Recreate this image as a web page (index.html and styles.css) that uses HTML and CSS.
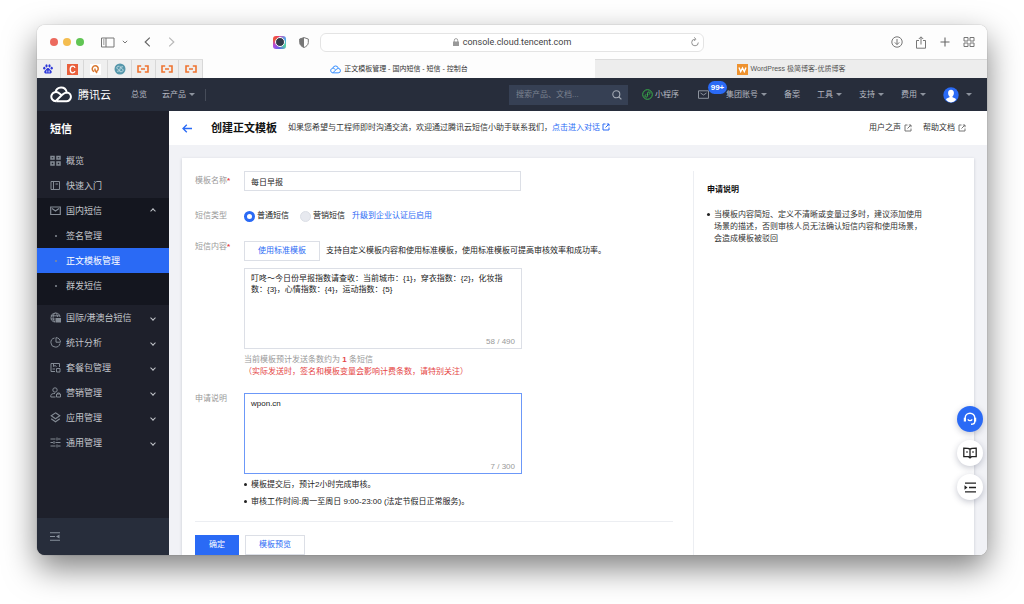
FILE: index.html
```html
<!DOCTYPE html>
<html lang="zh-CN">
<head>
<meta charset="utf-8">
<title>正文模板管理 - 国内短信 - 短信 - 控制台</title>
<link rel="stylesheet" href="styles.css">
</head>
<body>
<svg class="defs" aria-hidden="true">
  <symbol id="cloud" viewBox="0 0 22 17"><path d="M6.2 15.2h10a4.4 4.4 0 0 0 .6-8.800c-2 0-3.200 1-4.600 2.300L5.800 15M6 15.200a4.600 4.600 0 1 1 2.800-8.200l2.200 1.800M5.600 6.100a5.600 5.600 0 0 1 11-.2" fill="none" stroke="currentColor" stroke-width="2"/></symbol>
  <symbol id="ext" viewBox="0 0 8 8"><path d="M3.500 1H1v6h6V4.500M4.800 1H7v2.200M7 1 3.500 4.500" fill="none" stroke="currentColor" stroke-width="1"/></symbol>
  <symbol id="link" viewBox="0 0 12 8"><path d="M4.200 1H1v6h3.200M7.800 1H11v6H7.800M4 4h4" fill="none" stroke="#ee7330" stroke-width="1.600"/></symbol>
</svg>
<div class="window">
  <header class="toolbar">
    <div class="tools">
      <span class="lights"><i class="red"></i><i class="yellow"></i><i class="green"></i></span>
      <button class="icon-btn panel" aria-label="边栏"><svg width="14" height="11" viewBox="0 0 14 11"><path d="M.5 1h12.500v9H.5zM5 1v9M2 3h1.500M2 5h1.500M2 7h1.500" fill="none" stroke="#777"/></svg></button>
      <button class="icon-btn more" aria-label="标签组"><svg width="6" height="4" viewBox="0 0 6 4"><path d="m.8.8 2.200 2.200L5.200.8" fill="none" stroke="#777"/></svg></button>
      <button class="icon-btn back" aria-label="后退"><svg width="7" height="10" viewBox="0 0 7 10"><path d="M5.800.6 1.200 5l4.600 4.400" fill="none" stroke="#666" stroke-width="1.200"/></svg></button>
      <button class="icon-btn" aria-label="前进"><svg width="7" height="10" viewBox="0 0 7 10"><path d="M1.200.6 5.800 5 1.200 9.400" fill="none" stroke="#b8b8b8" stroke-width="1.200"/></svg></button>
      <span class="extensions">
        <span class="lens"><i></i></span>
        <svg width="10" height="11" viewBox="0 0 10 11"><path d="M5 .6 9.300 2v3.500c0 2.500-2 4-4.300 5-2.300-1-4.300-2.500-4.300-5V2z" fill="#fff" stroke="#777"/><path d="M5 .6v9.900c-2.300-1-4.300-2.500-4.300-5V2z" fill="#777"/></svg>
      </span>
    </div>
    <div class="address">
      <span class="url"><svg width="6" height="8" viewBox="0 0 6 8"><path d="M0 3.500h6V8H0z" fill="#999"/><path d="M1.300 4V2.300a1.700 1.700 0 0 1 3.400 0V4" fill="none" stroke="#999" stroke-width=".9"/></svg>console.cloud.tencent.com</span>
      <button class="icon-btn reload" aria-label="重新载入"><svg width="8" height="10" viewBox="0 0 8 10"><path d="M4 2.200a3.300 3.300 0 1 0 3.300 3.300M3.200.4 5 2.200 3.200 4" fill="none" stroke="#888" stroke-width=".9"/></svg></button>
    </div>
    <div class="actions">
      <button class="icon-btn" aria-label="下载"><svg width="12" height="12" viewBox="0 0 12 12"><circle cx="6" cy="6" r="5.200" fill="none" stroke="#777"/><path d="M6 3v5.500M3.800 6.400 6 8.600l2.200-2.200" fill="none" stroke="#777"/></svg></button>
      <button class="icon-btn" aria-label="分享"><svg width="12" height="13" viewBox="0 0 12 13"><path d="M4 4.500H1.500v7.700h9V4.500H8M6 8.500V1M3.800 3 6 .8 8.200 3" fill="none" stroke="#777"/></svg></button>
      <button class="icon-btn" aria-label="新标签页"><svg width="12" height="12" viewBox="0 0 12 12"><path d="M6 1.500v9M1.500 6h9" fill="none" stroke="#666" stroke-width="1.100"/></svg></button>
      <button class="icon-btn" aria-label="标签页概览"><svg width="12" height="12" viewBox="0 0 12 12"><path d="M1 1.500h4v3.500H1zM7 1.500h4v3.500H7zM1 7h4v3.500H1zM7 7h4v3.500H7z" fill="none" stroke="#777"/></svg></button>
    </div>
  </header>

  <div class="tabs">
    <div class="pinned">
      <span><svg width="10" height="10" viewBox="0 0 10 10" fill="#2b36d8"><ellipse cx="3.500" cy="1.800" rx="1.100" ry="1.600"/><ellipse cx="6.500" cy="1.800" rx="1.100" ry="1.600"/><ellipse cx="1.300" cy="4.200" rx="1.100" ry="1.400"/><ellipse cx="8.700" cy="4.200" rx="1.100" ry="1.400"/><path d="M5 4c1.500 0 1.800 1.500 3 2.500 1.500 1.300.5 3.300-1.200 3.100-1.200-.2-2.400-.2-3.600 0C1.500 9.800.5 7.800 2 6.500 3.200 5.500 3.500 4 5 4z"/><path d="M3.300 6.500h1v2h-1zM5.500 6.500h1.200v2H5.500z" fill="#cfd2f7"/></svg></span>
      <span><svg width="11" height="11" viewBox="0 0 11 11"><path d="M0 0h11v11H0z" fill="#e9603c"/><path d="M8 3.800C7.700 2.700 7 2.200 5.700 2.200 4 2.200 3.200 3.500 3.200 5.500S4 8.800 5.700 8.800C7 8.800 7.700 8.300 8 7.200" fill="none" stroke="#fff" stroke-width="1.300"/></svg></span>
      <span><svg width="11" height="11" viewBox="0 0 11 11"><path d="M0 0h11v11H0z" fill="#fff"/><path d="M4.200 7.600A3 3 0 1 1 6.500 7.500M5 4.500v1.800L7 9" fill="none" stroke="#d9772f" stroke-width="1.500"/></svg></span>
      <span><svg width="12" height="12" viewBox="0 0 12 12"><circle cx="6" cy="6" r="5.500" fill="#5697ab"/><path d="M5.500 3.300c-2-.3-3 .8-2.500 2s2 1 2 2-1 1.200-2 .8M6 8.700c2 .3 3.500-.7 3-2s-2-1-2-2 1-1.200 2-.8M6.500 3.500l-1 5" fill="none" stroke="#d4e8ed" stroke-width=".8"/></svg></span>
      <span><svg width="12" height="8"><use href="#link"/></svg></span>
      <span><svg width="12" height="8"><use href="#link"/></svg></span>
      <span><svg width="12" height="8"><use href="#link"/></svg></span>
    </div>
    <div class="tab active"><svg class="tab-cloud" width="11" height="9"><use href="#cloud"/></svg>正文模板管理 - 国内短信 - 短信 - 控制台</div>
    <div class="tab"><svg width="11" height="11" viewBox="0 0 11 11"><path d="M0 0h11v11H0z" fill="#ee922f"/><path d="m2 3.500 1.700 4L5.500 4l1.800 3.500 1.700-4" fill="none" stroke="#fff" stroke-width="1.400"/></svg>WordPress 极简博客-优质博客</div>
  </div>

  <nav class="nav">
    <a class="brand" href="#"><svg width="22" height="17"><use href="#cloud"/></svg>腾讯云</a>
    <a href="#" class="overview">总览</a>
    <a href="#" class="caret products">云产品</a>
    <div class="nav-right">
      <label class="search"><input type="text" aria-label="搜索" placeholder="搜索产品、文档..."><svg width="10" height="10" viewBox="0 0 10 10"><circle cx="4.300" cy="4.300" r="3.500" fill="none" stroke="#a4aab5" stroke-width="1.100"/><path d="m6.800 6.800 2.600 2.600" stroke="#a4aab5" stroke-width="1.200"/></svg></label>
      <a href="#" class="mini"><svg width="11" height="11" viewBox="0 0 11 11" fill="none" stroke="#38b34a"><circle cx="5.500" cy="5.500" r="4.800"/><path d="M4.300 5.700c-1.800.2-1.900 2.400-.2 2.400 1 0 1.400-.6 1.400-1.300V4.200c0-.7.500-1.300 1.400-1.300 1.700 0 1.600 2.200-.2 2.400"/></svg>小程序</a>
      <a href="#" class="mail" aria-label="消息"><svg width="11" height="9" viewBox="0 0 11 9"><path d="M.5.8h10v7.500H.5zM2.500 3l3 2 3-2" fill="none" stroke="#8d939e"/></svg><b class="badge">99+</b></a>
      <a href="#" class="caret">集团账号</a>
      <a href="#">备案</a>
      <a href="#" class="caret">工具</a>
      <a href="#" class="caret">支持</a>
      <a href="#" class="caret">费用</a>
      <a href="#" class="caret user" aria-label="账号"><svg width="16" height="16" viewBox="0 0 16 16"><circle cx="8" cy="8" r="7.700" fill="#2a6af5"/><path d="M8 2.800c2 0 3 1.400 2.900 3.200 0 1.500-.6 2.700-1.400 3.300v1l2.800 1.100c.5.200.6.900.6 1.500A7.500 7.500 0 0 1 8 15.500a7.500 7.500 0 0 1-4.900-2.600c0-.6.100-1.300.6-1.500l2.800-1.100v-1C5.700 8.700 5.100 7.500 5.100 6 5 4.200 6 2.800 8 2.800z" fill="#fff"/></svg></a>
    </div>
  </nav>

  <div class="body">
    <aside class="sidebar">
      <h2>短信</h2>
      <a href="#" class="item"><svg width="11" height="11" viewBox="0 0 11 11"><path d="M1 1.500h3v2.500H1zM7 7h3v3H7zM1 7h3v3H1zM7 1.500h3v2.500H7z" fill="none" stroke="currentColor" stroke-width="1.500"/></svg>概览</a>
      <a href="#" class="item"><svg width="11" height="11" viewBox="0 0 11 11"><path d="M1 1.500h8.500v8H1zM3.500 1.500v8M5.500 4h2.500" fill="none" stroke="currentColor"/></svg>快速入门</a>
      <div class="group">
        <a href="#" class="item open"><svg width="11" height="11" viewBox="0 0 11 11"><path d="M.7 2h9.600v7.500H.7zM2 3.500 5.500 6 9 3.500" fill="none" stroke="currentColor" stroke-width="1.200"/></svg>国内短信<i class="chev up"></i></a>
        <a href="#" class="item"><i class="dot"></i>签名管理</a>
        <a href="#" class="item current"><i class="dot"></i>正文模板管理</a>
        <a href="#" class="item"><i class="dot"></i>群发短信</a>
      </div>
      <a href="#" class="item"><svg width="11" height="11" viewBox="0 0 11 11"><path d="M5 10a4.500 4.500 0 1 1 5-5M5 .8C2.500 3 2.500 8 5 10M5.500.8C7 2 7.500 3.500 7.500 5M.8 3.800h9M.8 7h4" fill="none" stroke="currentColor"/><path d="M5.500 6H11v4.500H5.500z" fill="currentColor"/></svg>国际/港澳台短信<i class="chev"></i></a>
      <a href="#" class="item"><svg width="11" height="11" viewBox="0 0 11 11"><path d="M4.500 1a4.600 4.600 0 1 0 5.500 5.500M6 .6v4.600h4.500C10.300 2.500 8.500.8 6 .6z" fill="none" stroke="currentColor"/></svg>统计分析<i class="chev"></i></a>
      <a href="#" class="item"><svg width="11" height="11" viewBox="0 0 11 11"><path d="M5 9.500H1v-8h8.500V5M3.500 1.500v3L5 3.500l1.500 1M6.500 6.500h3.500v3.500H6.500zM2.500 7H5" fill="none" stroke="currentColor"/></svg>套餐包管理<i class="chev"></i></a>
      <a href="#" class="item"><svg width="11" height="11" viewBox="0 0 11 11"><circle cx="5" cy="3" r="2.200" fill="none" stroke="currentColor"/><path d="M5.500 10H.8V8.500C1 7 2.500 6.500 5 6.500M6.500 7h4v3h-4zM7.500 7V6h2v1" fill="none" stroke="currentColor"/></svg>营销管理<i class="chev"></i></a>
      <a href="#" class="item"><svg width="11" height="11" viewBox="0 0 11 11"><path d="m5.500.8 4.300 3-4.300 3-4.300-3zM1.200 6.800l4.300 3 4.300-3" fill="none" stroke="currentColor" stroke-width="1.100"/></svg>应用管理<i class="chev"></i></a>
      <a href="#" class="item"><svg width="11" height="11" viewBox="0 0 11 11"><path d="M.5 2h5M8 2h2.500M7 .5v3M.5 5.500H3M5.500 5.500h5M4 4v3M.5 9h5M8 9h2.500M7 7.500v3" fill="none" stroke="currentColor"/></svg>通用管理<i class="chev"></i></a>
      <div class="collapse"><button class="icon-btn" aria-label="收起菜单"><svg width="10" height="9" viewBox="0 0 10 9"><path d="M0 .8h10M0 4.500h5M0 8.200h10" stroke="#87909c" stroke-width="1.100"/><path d="M9.500 2.500v4L6 4.500z" fill="#87909c"/></svg></button></div>
    </aside>

    <main class="main">
      <div class="heading">
        <a href="#" class="return" aria-label="返回"><svg width="10" height="9" viewBox="0 0 10 9"><path d="M10 4.500H1.200M4.800.7 1 4.500l3.800 3.800" fill="none" stroke="#2a6af5" stroke-width="1.300"/></svg></a>
        <h1>创建正文模板</h1>
        <p>如果您希望与工程师即时沟通交流，欢迎通过腾讯云短信小助手联系我们，<a href="#">点击进入对话 <svg width="8" height="8"><use href="#ext"/></svg></a></p>
        <div class="help"><a href="#">用户之声<svg width="8" height="8"><use href="#ext"/></svg></a><a href="#">帮助文档<svg width="8" height="8"><use href="#ext"/></svg></a></div>
      </div>
      <div class="card">
        <form class="form">
          <div class="row name-row">
            <label for="name">模板名称<em>*</em></label>
            <input id="name" class="text" type="text" value="每日早报">
          </div>
          <div class="row type-row">
            <span class="label">短信类型</span>
            <div class="radios">
              <label><input type="radio" name="type" checked>普通短信</label>
              <label><input type="radio" name="type" disabled>营销短信</label>
              <a href="#">升级到企业认证后启用</a>
            </div>
          </div>
          <div class="row content-row">
            <label for="content">短信内容<em>*</em></label>
            <div>
              <div class="standard"><button type="button" class="btn">使用标准模板</button><span>支持自定义模板内容和使用标准模板，使用标准模板可提高审核效率和成功率。</span></div>
              <div class="area"><textarea id="content">叮咚～今日份早报指数请查收：当前城市：{1}，穿衣指数：{2}，化妆指数：{3}，心情指数：{4}，运动指数：{5}</textarea><span class="count">58 / 490</span></div>
              <p class="hint">当前模板预计发送条数约为 <b>1</b> 条短信</p>
              <p class="hint warn">（实际发送时，签名和模板变量会影响计费条数，请特别关注）</p>
            </div>
          </div>
          <div class="row">
            <label for="note">申请说明</label>
            <div>
              <div class="area"><textarea id="note" class="focused">wpon.cn</textarea><span class="count">7 / 300</span></div>
              <ul class="notes"><li>模板提交后，预计2小时完成审核。</li><li>审核工作时间:周一至周日 9:00-23:00 (法定节假日正常服务)。</li></ul>
            </div>
          </div>
          <div class="submit"><button type="button" class="btn primary">确定</button><button type="button" class="btn">模板预览</button></div>
        </form>
        <section class="guide">
          <h3>申请说明</h3>
          <ul><li>当模板内容简短、定义不清晰或变量过多时，建议添加使用场景的描述，否则审核人员无法确认短信内容和使用场景，会造成模板被驳回</li></ul>
        </section>
      </div>
    </main>
  </div>

  <div class="floats">
    <button class="round blue" aria-label="客服"><svg width="16" height="16" viewBox="0 0 16 16"><path d="M3.200 9.500V7a4.800 4.800 0 0 1 9.600 0v3.500c0 1.800-1.300 2.800-3.800 2.800" fill="none" stroke="#fff" stroke-width="1.400"/><path d="M1.800 6.800h2.200v3.800H1.800zM12 6.800h2.200v3.800H12z" fill="#fff"/><path d="M5.800 8.300c1.100 1.700 3.300 1.700 4.400 0" fill="none" stroke="#fff" stroke-width="1.300"/></svg></button>
    <button class="round" aria-label="文档"><svg width="14" height="12" viewBox="0 0 14 12"><path d="M7 2.200C5.500 1.200 3 1.200.8 1.200v8.500H5.500L7 11l1.500-1.300h4.700V1.200C11 1.200 8.500 1.200 7 2.200zM7 2v9" fill="none" stroke="#222" stroke-width="1.300"/><path d="M3 5h2M9 5h2" stroke="#222" stroke-width="1.200"/></svg></button>
    <button class="round" aria-label="展开"><svg width="12" height="11" viewBox="0 0 12 11"><path d="M1 1.200h11M5 5.500h7M1 9.800h11" stroke="#222" stroke-width="1.300"/><path d="m.5 3.200 3 2.300-3 2.300z" fill="#222"/></svg></button>
  </div>
</div>
</body>
</html>
```

FILE: styles.css
```css
* { box-sizing: border-box; }
body {
  margin: 0;
  height: 100vh;
  padding: 25px 37px 49px;
  background: #fff;
  color: #222;
  font: 8px/12px "Liberation Sans", "Noto Sans CJK SC", sans-serif;
  overflow: hidden;
}
.defs { position: absolute; width: 0; height: 0; }
h1, h2, h3, p, ul { margin: 0; padding: 0; }
ul { list-style: none; }
a { color: inherit; text-decoration: none; }
button, input, textarea { font: inherit; color: inherit; margin: 0; }
svg { flex: none; }
.window {
  position: relative;
  display: flex;
  flex-direction: column;
  height: 100%;
  border-radius: 8px;
  overflow: hidden;
  background: #fff;
}
body::before {
  content: "";
  position: absolute;
  inset: 25px 37px 49px;
  border-radius: 8px;
  box-shadow: 0 0 1px rgba(0, 0, 0, .5), 0 13px 32px rgba(0, 0, 0, .5);
}
.icon-btn { display: flex; padding: 0; border: 0; background: none; }

/* Browser chrome */
.toolbar {
  display: grid;
  grid-template-columns: 1fr 384px 1fr;
  align-items: center;
  height: 34px;
  background: #fdfdfd;
}
.tools { display: flex; align-items: center; padding: 0 11px 0 13px; }
.lights { display: flex; gap: 5px; }
.lights i { width: 8px; height: 8px; border-radius: 50%; }
.red { background: #ec6a5e; }
.yellow { background: #f4bd50; }
.green { background: #61c554; }
.panel { margin-left: 17px; }
.more { margin-left: 7px; }
.back { margin: 0 17px 0 16px; }
.extensions { display: flex; align-items: center; gap: 13px; margin-left: auto; }
.lens {
  display: grid;
  place-items: center;
  width: 13px;
  height: 13px;
  border-radius: 3px;
  background: conic-gradient(#d64fb8, #4aa8ee, #55d2a0, #5f63e8, #b14be0, #f0583a, #e93b67);
}
.lens i { width: 10px; height: 10px; border: 1px solid #fff; border-radius: 50%; background: #333b4a; }
.address {
  display: flex;
  align-items: center;
  height: 19px;
  padding-right: 4px;
  border: 1px solid #e4e4e4;
  border-radius: 6px;
  background: #fff;
}
.url {
  flex: 1;
  display: flex;
  align-items: center;
  justify-content: center;
  gap: 4px;
  padding-left: 12px;
  color: #444;
  font: 9px/12px Roboto, sans-serif;
}
.actions { display: flex; justify-content: flex-end; align-items: center; gap: 12px; padding-right: 12px; }
.tabs { display: flex; height: 19px; color: #555; font-size: 7px; }
.pinned { display: flex; width: 166px; background: #efefef; border-top: 1px solid #ddd; }
.pinned span { flex: 1; display: grid; place-items: center; border-right: 1px solid #d8d8d8; }
.tab { flex: 1; display: flex; align-items: center; justify-content: center; gap: 3px; background: #ededed; border-top: 1px solid #dcdcdc; }
.tab.active { background: #fdfdfd; border-color: #fdfdfd; color: #333; }
.tab-cloud { color: #348dff; }

/* Console navigation */
.nav { display: flex; align-items: center; height: 33px; padding: 0 15px 0 13px; background: #272d3b; color: #b6bac2; }
.brand { display: flex; align-items: center; gap: 6px; color: #fff; font-size: 11px; }
.overview { margin-left: 20px; }
.products { margin-left: 15px; padding-right: 10px; border-right: 1px solid #464c59; }
.caret { display: flex; align-items: center; gap: 3px; }
.caret::after { content: ""; border: 3px solid transparent; border-top-color: #8d939e; border-bottom: 0; }
.nav-right { display: flex; align-items: center; gap: 17px; margin-left: auto; }
.search { display: flex; align-items: center; width: 119px; height: 20px; padding: 0 6px 0 7px; background: #364054; margin-right: -3px; }
.search input { flex: 1; min-width: 0; padding: 0; border: 0; outline: 0; background: none; }
.search input::placeholder { color: #7b828f; }
.mini { display: flex; align-items: center; gap: 2px; margin-right: 2px; }
.mail { position: relative; display: flex; }
.badge {
  position: absolute;
  left: 10px;
  bottom: 5px;
  width: 19px;
  border-radius: 7px;
  background: #2a6af5;
  color: #fff;
  font-size: 8px;
  line-height: 13px;
  text-align: center;
}
.user { gap: 7px; }

/* Sidebar */
.body { flex: 1; display: flex; min-height: 0; }
.sidebar { display: flex; flex-direction: column; width: 132px; background: #1e202b; color: #c3c6cb; font-size: 9px; }
.sidebar h2 { padding-left: 13px; color: #fff; font-size: 11px; line-height: 37px; }
.item { display: flex; align-items: center; gap: 5px; height: 25px; padding: 0 13px; }
.item svg { color: #848b95; }
.group { padding-bottom: 7px; background: #14161f; }
.current { background: #2a6af5; color: #fff; }
.dot { width: 11px; display: grid; place-items: center; }
.dot::before { content: ""; width: 2px; height: 2px; border-radius: 50%; background: #858b95; }
.chev { width: 4px; height: 4px; margin-left: auto; margin-right: 1px; border: solid #c3c6cb; border-width: 0 1px 1px 0; transform: rotate(45deg); }
.chev.up { transform: rotate(225deg); }
.collapse { display: flex; align-items: center; height: 37px; margin-top: auto; padding-left: 13px; background: #272d3b; }

/* Page */
.main { flex: 1; display: flex; flex-direction: column; min-width: 0; background: #f1f2f6; }
.heading { display: flex; align-items: center; height: 34px; padding: 0 21px 0 13px; background: #fff; color: #333; }
.return { display: flex; margin-right: 19px; }
.heading h1 { margin-right: 11px; color: #111; font-size: 11px; line-height: 16px; }
.heading p a { color: #2a6af5; }
.heading p svg { vertical-align: -1px; }
.help { display: flex; gap: 11px; margin-left: auto; }
.help a { display: flex; align-items: center; gap: 3px; }
.help svg { color: #777; }
.card { flex: 1; display: flex; min-height: 0; margin: 13px 13px 0; padding: 13px 13px 0; background: #fff; box-shadow: 0 1px 3px rgba(30, 40, 70, .2); }
.form { flex: 1; padding-right: 20px; }
.row { display: grid; grid-template-columns: 49px 1fr; }
.row > label, .label { color: #999; }
em { color: #e54545; font-style: normal; font-weight: bold; }
.text { width: 277px; height: 20px; padding: 0 6px; border: 1px solid #dcdfe6; outline: 0; background: #fff; }
.row > label[for="name"] { padding-top: 4px; }
.name-row { margin-bottom: 19px; }
.type-row { margin-bottom: 19px; }
.radios { display: flex; gap: 7px; align-items: center; }
.radios label { display: flex; align-items: center; gap: 2px; margin-right: 4px; }
.radios label + label { margin-right: 0; }
.radios input { appearance: none; width: 11px; height: 11px; border: 3px solid #2a6af5; border-radius: 50%; background: #fff; }
.radios input:disabled { border: 1px solid #dcdfe6; background: #e7e9ef; }
.radios a { color: #2a6af5; }
.content-row { margin-bottom: 15px; }
.standard { display: flex; align-items: center; gap: 6px; margin-bottom: 7px; }
.btn { height: 20px; padding: 0 13px; border: 1px solid #dcdfe6; background: #fff; color: #2a6af5; }
.area { position: relative; width: 278px; }
.area textarea { display: block; width: 100%; height: 81px; padding: 4px 6px; border: 1px solid #dcdfe6; outline: 0; resize: none; line-height: 11px; overflow: hidden; }
.area .focused { border-color: #6c98f8; }
.count { position: absolute; right: 7px; bottom: 1px; color: #999; }
.hint { color: #999; }
.area + .hint { margin-top: 5px; }
.hint b { color: #e54545; }
.hint.warn { color: #e54545; }
.notes { display: grid; gap: 5px; padding-top: 5px; }
li { position: relative; padding-left: 7px; }
li::before { content: ""; position: absolute; left: 0; top: 4px; width: 3px; height: 3px; border-radius: 50%; background: #222; }
.submit { display: flex; gap: 6px; margin-top: 13px; padding-top: 13px; border-top: 1px solid #eceef2; }
.primary { border-color: #2a6af5; background: #2a6af5; color: #fff; }
.guide { width: 268px; padding: 13px 43px 0 13px; border-left: 1px solid #eceef2; color: #333; }
.guide h3 { margin-bottom: 13px; color: #111; font-size: 8px; line-height: 12px; }
.guide ul { width: 216px; }

/* Floating help */
.floats { position: absolute; right: 4px; bottom: 55px; display: grid; gap: 8px; }
.round { display: grid; place-items: center; width: 26px; height: 26px; padding: 0; border: 0; border-radius: 50%; background: #fff; box-shadow: 0 2px 6px rgba(30, 40, 70, .25); }
.blue { background: #2a6af5; }
```
